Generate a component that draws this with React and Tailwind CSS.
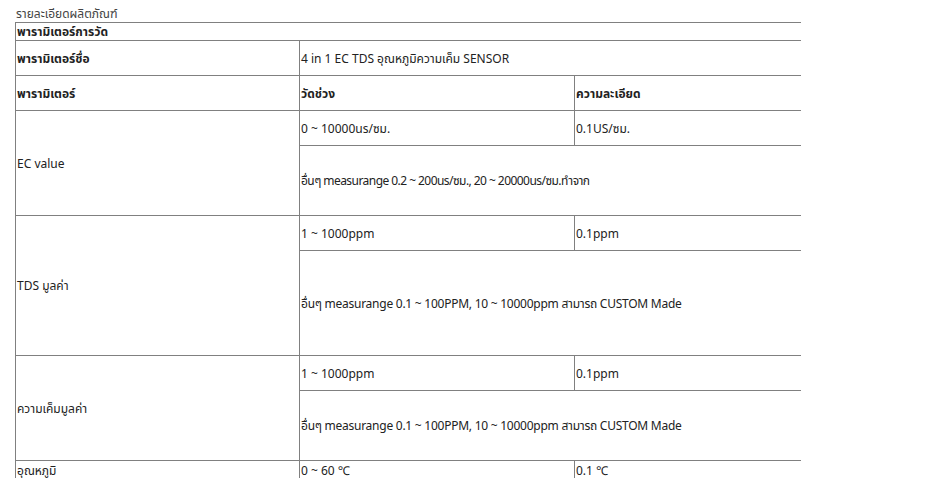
import React from "react";

// Filas de medición: rango, resolución y nota
const rows = [
  { name: "EC value", range: "0 ~ 10000us/ซม.", res: "0.1US/ซม.", note: "อื่นๆ measurange 0.2 ~ 200us/ซม., 20 ~ 20000us/ซม.ทำจาก", noteH: "h-[70px]", noteCls: "tracking-[-0.55px]" },
  { name: "TDS มูลค่า", range: "1 ~ 1000ppm", res: "0.1ppm", note: "อื่นๆ measurange 0.1 ~ 100PPM, 10 ~ 10000ppm สามารถ CUSTOM Made", noteH: "h-[105px]", noteCls: "tracking-[-0.25px]" },
  { name: "ความเค็มมูลค่า", range: "1 ~ 1000ppm", res: "0.1ppm", note: "อื่นๆ measurange 0.1 ~ 100PPM, 10 ~ 10000ppm สามารถ CUSTOM Made", noteH: "h-[70px]", noteCls: "tracking-[-0.25px]" },
];

const cell = "border-l border-t border-b border-[#808080] px-[1px] align-middle text-left";

export default function App() {
  return (
    <div className="bg-white min-h-screen pl-[15px] pt-[6px] text-[12px] leading-[15px] text-[#222]" style={{ fontFamily: "Tahoma, 'Noto Sans', 'Noto Sans Thai', 'DejaVu Sans', sans-serif" }}>
      <div className="pl-[1px] h-[16px] text-[#444]">รายละเอียดผลิตภัณฑ์</div>
      <table className="border-collapse w-[785px] table-fixed">
        <colgroup>
          <col className="w-[284px]" />
          <col className="w-[275px]" />
          <col className="w-[226px]" />
        </colgroup>
        <tbody>
          <tr className="h-[18px]">
            <td colSpan={3} className={cell + " font-bold"}>พารามิเตอร์การวัด</td>
          </tr>
          <tr className="h-[35px]">
            <td className={cell + " font-bold"}>พารามิเตอร์ชื่อ</td>
            <td colSpan={2} className={cell}>4 in 1 EC TDS อุณหภูมิความเค็ม SENSOR</td>
          </tr>
          <tr className="h-[35px]">
            <td className={cell + " font-bold"}>พารามิเตอร์</td>
            <td className={cell + " font-bold"}>วัดช่วง</td>
            <td className={cell + " font-bold"}>ความละเอียด</td>
          </tr>
          {rows.map((r) => (
            <React.Fragment key={r.name}>
              <tr className="h-[35px]">
                <td rowSpan={2} className={cell}>{r.name}</td>
                <td className={cell}>{r.range}</td>
                <td className={cell}>{r.res}</td>
              </tr>
              <tr className={r.noteH}>
                <td colSpan={2} className={cell + " " + r.noteCls}>{r.note}</td>
              </tr>
            </React.Fragment>
          ))}
          <tr className="h-[20px]">
            <td className={cell}>อุณหภูมิ</td>
            <td className={cell}>0 ~ 60 ℃</td>
            <td className={cell}>0.1 ℃</td>
          </tr>
        </tbody>
      </table>
    </div>
  );
}
